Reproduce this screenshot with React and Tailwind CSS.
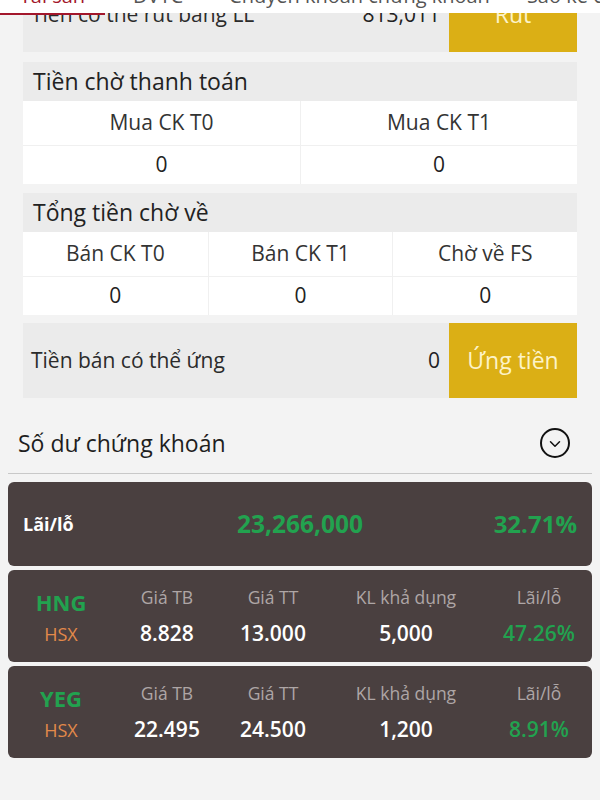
import { ChevronDown } from "lucide-react";

const tabs = [
  { label: "Tài sản", active: true, cls: "w-[105px] justify-center" },
  { label: "DVTC", cls: "ml-[28px]" },
  { label: "Chuyển khoản chứng khoán", cls: "ml-[46px]" },
  { label: "Sao kê chi tiết", cls: "ml-[37px]" },
];

const stocks = [
  { code: "HNG", avg: "8.828", price: "13.000", qty: "5,000", pl: "47.26%" },
  { code: "YEG", avg: "22.495", price: "24.500", qty: "1,200", pl: "8.91%" },
];

function ActionRow({ label, amount, button, className = "" }) {
  return (
    <div className={"flex items-center h-[75px] bg-[#ebebeb] " + className}>
      <span className="flex-1 pl-[8px] text-[21px] text-[#2b2b2b]">{label}</span>
      <span className="pr-[9px] text-[21px] text-[#222]">{amount}</span>
      <button className="w-[128px] h-full bg-[#dbaf15] text-[23px] text-[#fdf3c8]">
        {button}
      </button>
    </div>
  );
}

function PendingTable({ title, cols, className = "" }) {
  const gridCls = cols.length === 3 ? "grid grid-cols-3" : "grid grid-cols-2";
  return (
    <div className={className}>
      <div className="h-[39px] flex items-center pl-[10px] bg-[#ebebeb] text-[23px] text-[#222]">
        {title}
      </div>
      <div className={gridCls + " bg-white"}>
        {cols.map((c, i) => (
          <div
            key={c}
            className={
              "h-[45px] flex items-center justify-center text-[21px] text-[#333] border-b border-[#f0f0f0] " +
              (i > 0 ? "border-l" : "")
            }
          >
            {c}
          </div>
        ))}
        {cols.map((c, i) => (
          <div
            key={c + "v"}
            className={
              "h-[38px] flex items-center justify-center text-[21px] text-[#222] border-[#f0f0f0] " +
              (i > 0 ? "border-l" : "")
            }
          >
            0
          </div>
        ))}
      </div>
    </div>
  );
}

function StockCard({ s }) {
  const cell = "flex flex-col items-center pt-[15px]";
  const label = "h-[24px] leading-[24px] text-[17.5px] text-[#aea6a6]";
  const value = "mt-[10px] h-[28px] leading-[28px] text-[21px] font-semibold";
  return (
    <div className="mt-[4px] h-[92px] rounded-[6px] bg-[#4a4040] grid grid-cols-[106px_106px_106px_160px_106px]">
      <div className="flex flex-col items-center pt-[18px]">
        <span className="h-[28px] leading-[28px] text-[22px] font-bold text-[#22a24f]">{s.code}</span>
        <span className="mt-[6px] h-[24px] leading-[24px] text-[18px] text-[#e3894a]">HSX</span>
      </div>
      <div className={cell}>
        <span className={label}>Giá TB</span>
        <span className={value + " text-white"}>{s.avg}</span>
      </div>
      <div className={cell}>
        <span className={label}>Giá TT</span>
        <span className={value + " text-white"}>{s.price}</span>
      </div>
      <div className={cell}>
        <span className={label}>KL khả dụng</span>
        <span className={value + " text-white"}>{s.qty}</span>
      </div>
      <div className={cell}>
        <span className={label}>Lãi/lỗ</span>
        <span className={value + " text-[21.5px] text-[#22a24f]"}>{s.pl}</span>
      </div>
    </div>
  );
}

export default function App() {
  return (
    <div className="relative min-h-screen flex flex-col overflow-hidden bg-[#f3f3f3] font-['Open_Sans',sans-serif]">
      {/* tab bar stuck on top, content scrolled under it */}
      <div className="absolute top-0 left-0 right-0 z-10 h-[13px] bg-white overflow-hidden">
        <div className="flex -mt-[14px] leading-[20px] text-[20px] whitespace-nowrap">
          {tabs.map((t) => (
            <span
              key={t.label}
              className={"flex shrink-0 " + t.cls + (t.active ? " text-[#a3172c]" : " text-[#555]")}
            >
              {t.label}
            </span>
          ))}
        </div>
      </div>
      <div className="absolute top-[13px] left-0 z-10 w-[105px] h-[2px] bg-[#a3172c]" />

      <div className="px-[23px] -mt-[23px]">
        <ActionRow label="Tiền có thể rút bằng LL" amount="813,011" button="Rút" />
        <PendingTable
          className="mt-[10px]"
          title="Tiền chờ thanh toán"
          cols={["Mua CK T0", "Mua CK T1"]}
        />
        <PendingTable
          className="mt-[9px]"
          title="Tổng tiền chờ về"
          cols={["Bán CK T0", "Bán CK T1", "Chờ về FS"]}
        />
        <ActionRow className="mt-[8px]" label="Tiền bán có thể ứng" amount="0" button="Ứng tiền" />
      </div>

      <div className="px-2">
        <div className="flex items-center justify-between pt-[30px] pb-[15px] border-b border-[#c8c8c8]">
          <span className="ml-[10px] leading-[30px] text-[23px] text-[#1e1e1e]">Số dư chứng khoán</span>
          <span className="mr-[22px] w-[30px] h-[30px] rounded-full border-2 border-[#111] flex items-center justify-center">
            <ChevronDown size={18} strokeWidth={2} className="text-[#111] mt-[1px]" />
          </span>
        </div>

        <div className="mt-[8px] h-[84px] rounded-[6px] bg-[#4a4040] grid grid-cols-3 items-center px-[15px]">
          <span className="text-[18px] font-bold text-white">Lãi/lỗ</span>
          <span className="text-center text-[24.5px] font-bold text-[#22a24f]">23,266,000</span>
          <span className="text-right text-[24px] font-bold text-[#22a24f]">32.71%</span>
        </div>

        {stocks.map((s) => (
          <StockCard key={s.code} s={s} />
        ))}
      </div>
    </div>
  );
}
